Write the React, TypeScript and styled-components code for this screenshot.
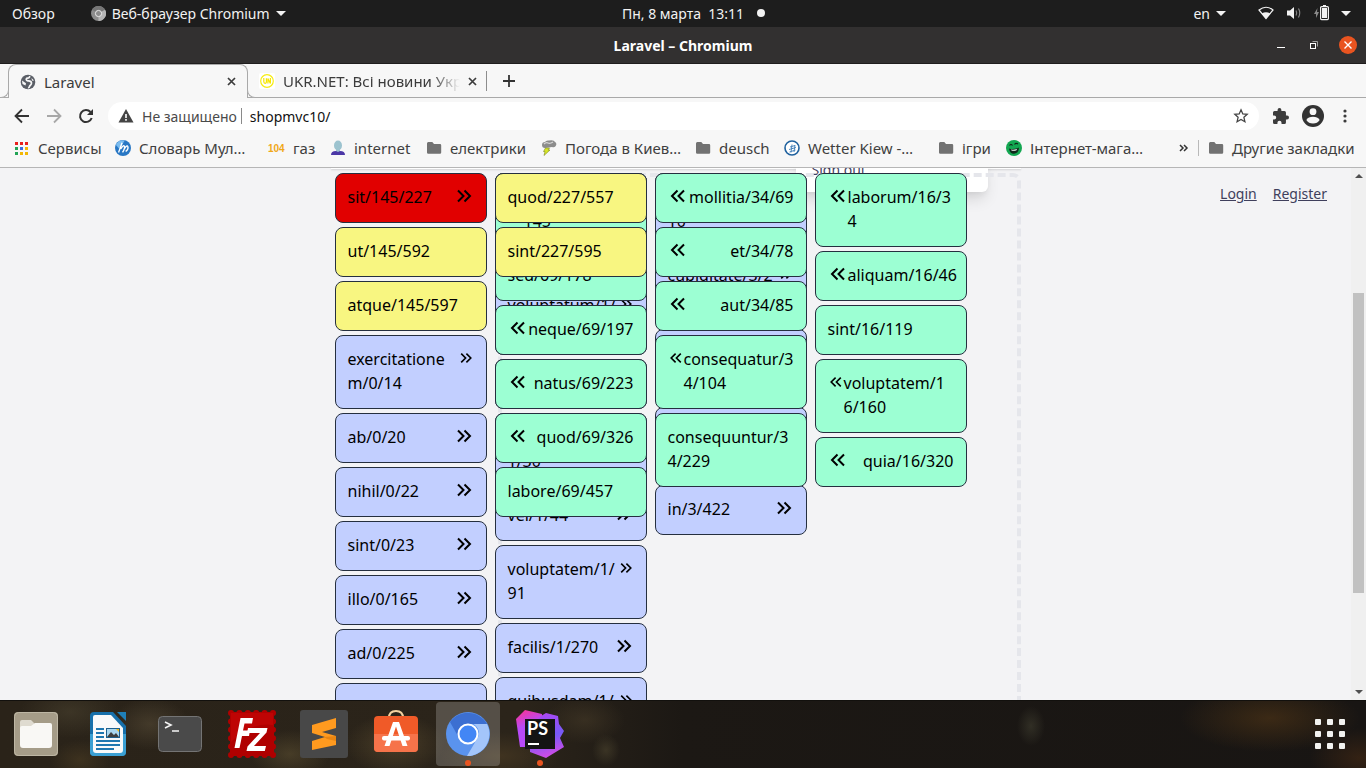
import React from "react";
import styled, { createGlobalStyle, css } from "styled-components";

const Global = createGlobalStyle`
  *, *::before, *::after { box-sizing: border-box; }
  body { margin: 0; font-family: "Noto Sans", "Open Sans", sans-serif; font-size: 14px; }
  button, input { font: inherit; color: inherit; }
  button { background: none; border: 0; padding: 0; display: inline-flex; align-items: center; }
  svg { display: block; flex: none; }
`;

const Desktop = styled.div`
  height: 100vh;
  display: flex;
  flex-direction: column;
  overflow: hidden;
`;

/* ---------- system bar ---------- */
const SystemBar = styled.header`
  flex: none;
  height: 27px;
  padding-bottom: 1px;
  display: grid;
  grid-template-columns: 1fr auto 1fr;
  align-items: center;
  background: #1d1d1d;
  color: #f2f2f2;
  font-size: 14px;
`;
const BarSide = styled.div<{ $end?: boolean }>`
  display: flex;
  align-items: center;
  justify-content: ${(p) => (p.$end ? "flex-end" : "flex-start")};
  gap: ${(p) => (p.$end ? "32px" : "36px")};
  padding: ${(p) => (p.$end ? "0 15px" : "0 12px")};
`;
const BarButton = styled.button<{ $gap?: number }>`
  gap: ${(p) => p.$gap ?? 6}px;
  white-space: pre;
`;
const Clock = styled.button`
  gap: 13px;
  padding-left: 21px;
  white-space: pre;
`;
const Dot = styled.span`
  width: 8px;
  height: 8px;
  border-radius: 50%;
  background: #f2f2f2;
`;

/* ---------- window title ---------- */
const TitleBar = styled.div`
  flex: none;
  height: 37px;
  display: grid;
  grid-template-columns: 1fr auto 1fr;
  align-items: center;
  background: #323030;
  border-bottom: 1px solid #1f1d1d;
  color: #fff;
  font-weight: 700;
  font-size: 14px;
`;
const WindowButtons = styled.div`
  display: flex;
  justify-content: flex-end;
  align-items: center;
  gap: 17px;
  padding-right: 9px;
`;

/* ---------- tabs ---------- */
const TabStrip = styled.div`
  flex: none;
  height: 34px;
  display: flex;
  padding-left: 8px;
  background: #f7f7f7;
  box-shadow: inset 0 -1px #a9a9a9;
  color: #3c3c3c;
  font-size: 15px;
`;
const Tab = styled.div<{ $active?: boolean }>`
  position: relative;
  display: flex;
  align-items: center;
  gap: 8px;
  width: 240px;
  padding: 0 11px;
  ${(p) =>
    p.$active &&
    css`
      background: #f7f7f7;
      border: 1px solid #a9a9a9;
      border-bottom: 0;
      border-radius: 8px 8px 0 0;
      &::before, &::after {
        content: "";
        position: absolute;
        bottom: 0;
        width: 8px;
        height: 8px;
        background: #f7f7f7;
        border-bottom: 1px solid #a9a9a9;
      }
      &::before { left: -8px; border-right: 1px solid #a9a9a9; border-bottom-right-radius: 8px; }
      &::after { right: -8px; border-left: 1px solid #a9a9a9; border-bottom-left-radius: 8px; }
    `}
`;
const TabTitle = styled.span<{ $fade?: boolean }>`
  flex: 1;
  overflow: hidden;
  white-space: nowrap;
  ${(p) => p.$fade && css`mask-image: linear-gradient(90deg, #000 84%, transparent);`}
`;
const NewTab = styled.button`
  align-self: center;
  height: 20px;
  margin-left: -2px;
  padding-left: 16px;
  border-left: 1px solid #8d8d8d;
`;

/* ---------- address row ---------- */
const Toolbar = styled.div`
  flex: none;
  display: flex;
  align-items: center;
  height: 36px;
  padding: 0 13px 0 14px;
  gap: 14px;
  background: #f7f7f7;
`;
const ToolGroup = styled.div<{ $gap: number }>`
  display: flex;
  align-items: center;
  gap: ${(p) => p.$gap}px;
`;
const Omnibox = styled.div`
  flex: 1;
  display: flex;
  align-items: center;
  height: 28px;
  padding: 0 10px;
  border-radius: 14px;
  background: #fff;
`;
const Security = styled.button`
  gap: 8px;
  padding-right: 4px;
  border-right: 1px solid #8a8a8a;
  height: 16px;
  color: #4a4a4a;
`;
const Address = styled.input`
  flex: 1;
  border: 0;
  outline: 0;
  padding: 0 8px;
  background: none;
  color: #111;
`;

/* ---------- bookmarks ---------- */
const Bookmarks = styled.nav`
  flex: none;
  display: flex;
  align-items: center;
  height: 34px;
  padding: 0 12px 5px 14px;
  background: #f7f7f7;
  border-bottom: 1px solid #b6b6b6;
  color: #3f3f3f;
  font-size: 15px;
`;
const Bookmark = styled.a<{ $width: number }>`
  display: flex;
  align-items: center;
  gap: 8px;
  flex: none;
  width: ${(p) => p.$width}px;
  color: inherit;
  text-decoration: none;
  white-space: nowrap;
`;
const More = styled.button`
  margin-left: auto;
  padding: 0 9px;
  height: 16px;
  margin-right: 9px;
  border-right: 1px solid #b9b9b9;
`;

/* ---------- page ---------- */
const Viewport = styled.div`
  flex: 1;
  min-height: 0;
  display: flex;
  background: #f3f3f5;
`;
const Page = styled.main`
  flex: 1;
  display: grid;
  grid-template-columns: 1fr minmax(0, 690px) 1fr;
  overflow: hidden;
`;
const Content = styled.div`
  grid-column: 2;
  position: relative;
  min-height: 0;
  padding: 5px 0 0 4px;
`;
const HeaderEdge = styled.div`
  position: absolute;
  inset: 0 0 auto 0;
  height: 1px;
  background: #fff;
  box-shadow: 0 1px 2px rgba(0, 0, 0, 0.2);
`;
const Dropdown = styled.div`
  position: absolute;
  top: -12px;
  left: 465px;
  width: 192px;
  height: 36px;
  padding: 4px 16px;
  border-radius: 0 0 6px 6px;
  background: #fff;
  box-shadow: 0 10px 15px -3px rgba(0, 0, 0, 0.12), 0 4px 6px -2px rgba(0, 0, 0, 0.06);
  color: #41415f;
  font-size: 14px;
  line-height: 20px;
`;
const DropZone = styled.div`
  position: absolute;
  top: 5px;
  left: 167px;
  right: 0;
  height: 900px;
  border: 4px dashed #e5e6eb;
  border-radius: 8px;
`;
const Tree = styled.div`
  position: relative;
  display: grid;
  grid-template-columns: repeat(4, 152px);
  column-gap: 8px;
  align-items: start;
`;
const List = styled.ul<{ $col: number }>`
  grid-row: 1;
  grid-column: ${(p) => p.$col};
  display: flex;
  flex-direction: column;
  gap: 4px;
  margin: 0;
  padding: 0;
  list-style: none;
`;
const tones = { red: "#e10000", yellow: "#f8f681", blue: "#c2cfff", green: "#9cffd3" };
type Tone = keyof typeof tones;
const Card = styled.li<{ $tone: Tone }>`
  display: flex;
  align-items: flex-start;
  justify-content: space-between;
  padding: 11px 12px 13px;
  border: 1px solid #252f3f;
  border-radius: 8px;
  background: ${(p) => tones[p.$tone]};
  color: #000;
`;
const Label = styled.span<{ $fill?: boolean }>`
  flex: ${(p) => (p.$fill ? "1" : "none")};
  font-size: 16px;
  line-height: 24px;
  white-space: nowrap;
`;
const Line = styled.span`
  display: block;
  min-height: 24px;
`;
const Arrow = styled.button<{ $small?: boolean }>`
  margin-top: ${(p) => (p.$small ? "3px" : "1px")};
`;
const Account = styled.nav`
  display: flex;
  justify-content: flex-end;
  align-items: flex-start;
  gap: 16px;
  padding: 16px 24px;
  font-size: 14px;
  line-height: 20px;
`;
const AccountLink = styled.a`
  color: #3f3f5c;
  text-decoration: underline;
`;

const Scrollbar = styled.div`
  flex: none;
  width: 15px;
  display: flex;
  flex-direction: column;
  align-items: center;
  padding: 5px 0;
  background: #f0f0f0;
`;
const Gap = styled.span<{ $grow: number }>`
  flex: ${(p) => p.$grow};
`;
const Thumb = styled.span<{ $grow: number }>`
  flex: ${(p) => p.$grow};
  width: 11px;
  background: #c1c1c1;
`;

/* ---------- dock ---------- */
const Dock = styled.footer`
  flex: none;
  height: 68px;
  display: flex;
  align-items: center;
  gap: 8px;
  padding: 0 21px 0 4px;
  box-shadow: inset 0 1px #12100d;
  background:
    radial-gradient(ellipse 50px 30px at 395px 44px, rgba(104, 86, 52, 0.5), transparent),
    radial-gradient(ellipse 40px 26px at 150px 24px, rgba(92, 80, 58, 0.5), transparent),
    radial-gradient(ellipse 40px 24px at 290px 54px, rgba(98, 84, 52, 0.5), transparent),
    radial-gradient(ellipse 50px 26px at 70px 12px, rgba(78, 70, 50, 0.5), transparent),
    radial-gradient(ellipse 30px 20px at 80px 60px, rgba(80, 64, 36, 0.5), transparent),
    radial-gradient(ellipse 60px 24px at 500px 56px, rgba(84, 66, 38, 0.5), transparent),
    radial-gradient(ellipse 40px 24px at 585px 20px, rgba(74, 62, 42, 0.5), transparent),
    radial-gradient(ellipse 14px 16px at 606px 50px, rgba(82, 74, 50, 0.5), transparent),
    radial-gradient(ellipse 14px 20px at 1031px 26px, rgba(64, 62, 48, 0.6), transparent),
    radial-gradient(ellipse 90px 34px at 1270px 18px, rgba(74, 50, 22, 0.7), transparent),
    radial-gradient(ellipse 50px 30px at 1360px 58px, rgba(70, 42, 20, 0.6), transparent),
    linear-gradient(90deg, #2a2319 0, #2b241a 38%, #1c1814 50%, #181513 100%);
`;
const DockItem = styled.button<{ $active?: boolean }>`
  position: relative;
  justify-content: center;
  width: 64px;
  height: 64px;
  border-radius: 4px;
  background: ${(p) => (p.$active ? "rgba(255, 255, 255, 0.2)" : "none")};
`;
const Running = styled.span`
  position: absolute;
  bottom: 0;
  left: 29px;
  width: 6px;
  height: 6px;
  border-radius: 50%;
  background: #e95420;
`;
const AppsButton = styled.button`
  margin-left: auto;
`;

/* ---------- icons ---------- */
const Caret = () => (
  <svg width="10" height="5" viewBox="0 0 10 5"><path d="M0 0h10L5 5z" fill="#f2f2f2" /></svg>
);
const Cross = () => (
  <svg width="9" height="9" viewBox="0 0 9 9"><path d="M1 1l7 7M8 1L1 8" stroke="#3c3c3c" strokeWidth="1.7" /></svg>
);
const Folder = () => (
  <svg width="16" height="16" viewBox="0 0 16 16"><path d="M1 3.500Q1 2 2.300 2h4L8 4h6q1.200 0 1.200 1.200V12.500q0 1.200-1.200 1.200H2.200Q1 13.700 1 12.500z" fill="#727272" /></svg>
);
const GreyChromium = () => (
  <svg width="15" height="15" viewBox="0 0 16 16">
    <circle cx="8" cy="8" r="8" fill="#8c8c8c" />
    <path d="M8 8L1 4a8 8 0 0 1 14 0z" fill="#767676" />
    <path d="M8 8l7-4a8 8 0 0 1-7 12z" fill="#b5b5b5" />
    <circle cx="8" cy="8" r="3.300" fill="#8c8c8c" stroke="#f0f0f0" strokeWidth="1" />
  </svg>
);
const Globe = () => (
  <svg width="16" height="16" viewBox="0 0 16 16">
    <circle cx="8" cy="8" r="7.300" fill="#5a5e66" />
    <path d="M9.500 2c.5 1.500-.8 2-2.200 2.200-1.700.3-1.200 2.300.4 2.600 1.700.3 3.500.2 3.800 2 .2 1.700-1.400 2.200-2 3.600-.3.900-.8 1.500-1.500 1.200" fill="none" stroke="#f7f7f7" strokeWidth="1.700" />
    <path d="M2 6.500l4 2.700-.5 2.300-3-1.500z" fill="#f7f7f7" />
    <path d="M11.500 4l2.500 2.500-2 .3z" fill="#f7f7f7" />
  </svg>
);
const UkrNet = () => (
  <svg width="16" height="16" viewBox="0 0 16 16">
    <rect width="16" height="16" rx="2" fill="#fff" />
    <circle cx="8" cy="8" r="6.300" fill="none" stroke="#f6ec12" strokeWidth="1.200" />
    <path d="M4.800 5v3.500q0 1.800 1.300 1.800T7.400 8.500V5.200M8.900 10.500V5.500l2.500 5V5" fill="none" stroke="#f6e600" strokeWidth="1.200" />
  </svg>
);
const markIcons: Record<string, React.ReactNode> = {
  apps: (
    <svg width="16" height="16" viewBox="0 0 16 16">
      {["#e8201c", "#e8201c", "#e8201c", "#22a455", "#3b6de0", "#f2b705", "#22a455", "#f2b705", "#f2b705"].map((c, i) => (
        <rect key={i} x={1 + (i % 3) * 5} y={2 + Math.floor(i / 3) * 5} width="3" height="3" fill={c} />
      ))}
    </svg>
  ),
  slovar: (
    <svg width="16" height="16" viewBox="0 0 18 18">
      <circle cx="9" cy="9" r="9" fill="#2877c4" />
      <path d="M1 5.500a9 9 0 0 1 10-5L5 10z" fill="#7cbdf0" />
      <path d="M4 14L8 3M6.500 10q3-5 4-3t-2 7M10.500 10q3-5 4-2.500t-2.500 5.500" fill="none" stroke="#fff" strokeWidth="1.500" />
    </svg>
  ),
  gas: (
    <svg width="17" height="16" viewBox="0 0 17 16">
      <text x="0" y="12" fontSize="10" fontWeight="700" fill="#f0a818" fontFamily="Liberation Sans, sans-serif">104</text>
    </svg>
  ),
  person: (
    <svg width="16" height="16" viewBox="0 0 16 16">
      <ellipse cx="8" cy="5.500" rx="4" ry="5" fill="#9cc3cf" />
      <path d="M6 9h4v3H6z" fill="#9cc3cf" />
      <path d="M1 15q0-4 5-4l2 1 2-1q5 0 5 4z" fill="#4b37a6" />
    </svg>
  ),
  storm: (
    <svg width="16" height="16" viewBox="0 0 16 16">
      <path d="M1 5q0-3 3-3 1-2 4-1.500Q13-.5 14 2q2 1 1 3.500Q14 8 11 7L4 8Q1 8 1 5z" fill="#8c8c8c" />
      <path d="M3 4q2-2 4-1t5-1" stroke="#d6d6d6" strokeWidth="1.300" fill="none" />
      <path d="M4.500 8h4L7 10h2l-6 5.500 1-4H2.500z" fill="#d7e626" stroke="#7d8a20" strokeWidth=".6" />
    </svg>
  ),
  wetter: (
    <svg width="16" height="16" viewBox="0 0 16 16">
      <circle cx="8" cy="8" r="7" fill="#fff" stroke="#1f619e" strokeWidth="1.600" />
      <path d="M5 9.500l7-2M5.500 12l6-2M6 7l5-1.500M7 12.500l1-8M10 12l1-7" stroke="#4d87bd" strokeWidth="1" />
    </svg>
  ),
  laugh: (
    <svg width="16" height="16" viewBox="0 0 16 16">
      <circle cx="8" cy="8" r="8" fill="#13a751" />
      <path d="M3 8.500q5 1.500 10-1-.5 6-5 6.300Q4 14 3 8.500z" fill="#10281a" />
      <path d="M3.500 5.500q1.500-2 3 0M8.500 4.500q1.500-2 3.500-.5" fill="none" stroke="#10281a" strokeWidth="1.200" />
      <path d="M5 9.500q3 .8 6-.5l-.5 1.200q-2.500 1-5 .3z" fill="#fff" />
    </svg>
  ),
  folder: <Folder />,
};

const marks: [string, string, number][] = [
  ["apps", "Сервисы", 101],
  ["slovar", "Словарь Мул…", 153],
  ["gas", "газ", 62],
  ["person", "internet", 96],
  ["folder", "електрики", 115],
  ["storm", "Погода в Киев…", 154],
  ["folder", "deusch", 89],
  ["wetter", "Wetter Kiew -…", 154],
  ["folder", "ігри", 68],
  ["laugh", "Інтернет-мага…", 140],
];

/* ---------- category tree ---------- */
type Item = { t: string[]; to?: "next" | "prev"; small?: boolean };
const next = (t: string[], small = false): Item => ({ t, to: "next", small });
const prev = (t: string[], small = false): Item => ({ t, to: "prev", small });
const plain = (...t: string[]): Item => ({ t });
const tinted = (tone: Tone, ...items: Item[]) => items.map((i) => ({ ...i, tone }));

const lists: { col: number; items: (Item & { tone: Tone })[] }[] = [
  {
    col: 1,
    items: [
      ...tinted("red", next(["sit/145/227"])),
      ...tinted("yellow", plain("ut/145/592"), plain("atque/145/597")),
      ...tinted(
        "blue",
        next(["exercitatione", "m/0/14"], true), next(["ab/0/20"]), next(["nihil/0/22"]),
        next(["sint/0/23"]), next(["illo/0/165"]), next(["ad/0/225"]), plain("")
      ),
    ],
  },
  {
    col: 2,
    items: tinted(
      "blue",
      plain(""), plain(""), next(["voluptatum/1/", ""], true), plain(""), plain("", "1/30"),
      next(["vel/1/44"]), next(["voluptatem/1/", "91"], true), next(["facilis/1/270"]),
      next(["quibusdam/1/", ""], true)
    ),
  },
  {
    col: 2,
    items: tinted(
      "green",
      prev(["", "145"], true), plain("sed/69/178"), prev(["neque/69/197"]),
      prev(["natus/69/223"]), prev(["quod/69/326"]), plain("labore/69/457")
    ),
  },
  { col: 2, items: tinted("yellow", plain("quod/227/557"), plain("sint/227/595")) },
  {
    col: 3,
    items: tinted(
      "blue",
      plain("", "10"), next(["cupiditate/3/2", ""], true), plain("", ""), plain("", ""), next(["in/3/422"])
    ),
  },
  {
    col: 3,
    items: tinted(
      "green",
      prev(["mollitia/34/69"]), prev(["et/34/78"]), prev(["aut/34/85"]),
      prev(["consequatur/3", "4/104"], true), plain("consequuntur/3", "4/229")
    ),
  },
  {
    col: 4,
    items: tinted(
      "green",
      prev(["laborum/16/3", "4"]), prev(["aliquam/16/46"]), plain("sint/16/119"),
      prev(["voluptatem/1", "6/160"], true), prev(["quia/16/320"])
    ),
  },
];

const Chevrons = ({ dir, small }: { dir: "next" | "prev"; small?: boolean }) => (
  <svg width={small ? 16 : 20} height={small ? 16 : 20} viewBox="0 0 20 20" fill="none" stroke="#000" strokeWidth="2">
    <path d={dir === "next" ? "M4 4.500l5.500 5.500L4 15.500M10.500 4.500L16 10l-5.500 5.500" : "M9.500 4.500L4 10l5.500 5.500M16 4.500L10.500 10l5.500 5.500"} />
  </svg>
);

const TreeCard = ({ item }: { item: Item & { tone: Tone } }) => {
  const arrow = item.to && (
    <Arrow $small={item.small} aria-label={item.to === "next" ? "Open" : "Back"}>
      <Chevrons dir={item.to} small={item.small} />
    </Arrow>
  );
  return (
    <Card $tone={item.tone}>
      {item.to === "prev" && arrow}
      <Label $fill={item.to === "prev" && item.t.length > 1}>
        {item.t.map((line, i) => <Line key={i}>{line}</Line>)}
      </Label>
      {item.to === "next" && arrow}
    </Card>
  );
};

/* ---------- dock icons ---------- */
const FilesIcon = () => (
  <svg width="44" height="44" viewBox="0 0 44 44">
    <rect width="44" height="44" rx="4" fill="#a59c88" />
    <rect x=".5" y=".5" width="43" height="43" rx="4" fill="none" stroke="#bdb6a4" />
    <path d="M6 10q0-2 2-2h9l4 4h15v8H6z" fill="#dfdbd0" />
    <path d="M6 16q0-2 2-2h9l4-3h15q2 0 2 2v20q0 3-3 3H9q-3 0-3-3z" fill="#f9f8f5" />
  </svg>
);
const WriterIcon = () => (
  <svg width="38" height="46" viewBox="0 0 38 46">
    <path d="M5 1h19l13 14v26q0 4-4 4H5q-4 0-4-4V5q0-4 4-4z" fill="#1770ab" />
    <path d="M1 23h36v18q0 4-4 4H5q-4 0-4-4z" fill="#3a9fd3" />
    <path d="M6 4h16l12 13v22q0 3-3 3H7q-3 0-3-3V6q0-2 2-2z" fill="#f8f9fa" />
    <path d="M28 1h9v9z" fill="#1f7fb8" />
    <path d="M7 18h8M7 22h8M7 26h8M7 30h24M7 34h24M7 38h18" stroke="#1d76b0" strokeWidth="2" />
    <rect x="17.500" y="17.500" width="13" height="9" fill="#a9d6ef" stroke="#1d5f8c" />
    <path d="M18 26l4-5 3 3 2-2 3 4z" fill="#3e3e3e" />
    <path d="M27 18h3v3z" fill="#f5b915" />
  </svg>
);
const TerminalIcon = () => (
  <svg width="44" height="36" viewBox="0 0 44 36">
    <rect x=".5" y=".5" width="43" height="35" rx="4" fill="#4a4a4a" stroke="#747474" />
    <path d="M7 6l6 3-6 3M14 15h7" fill="none" stroke="#f5f5f5" strokeWidth="1.600" />
  </svg>
);
const FileZillaIcon = () => (
  <svg width="48" height="48" viewBox="0 0 48 48">
    <rect x="2" y="2" width="44" height="44" fill="#b00000" />
    <rect x="3" y="3" width="42" height="42" fill="none" stroke="#b00000" strokeWidth="6" strokeLinecap="round" strokeDasharray="0 8.4" />
    <path d="M3 3h42v12Q22 12 3 32z" fill="#c40606" opacity=".7" />
    <path d="M12.500 8H25l-1 5.500h-7.500l-1.500 7h7L21 26h-7l-2.500 12H6.500z" fill="#fff" />
    <path d="M20 18h19.500l-1 4.500L26 36h12l-1.200 5H18.500l1-4.500L32 23H19z" fill="#fff" />
  </svg>
);
const SublimeIcon = () => (
  <svg width="48" height="48" viewBox="0 0 48 48">
    <rect width="48" height="48" rx="3" fill="#484848" />
    <path d="M36 8v10L22 22l14 4v9L12 40V31l13-4-13-4V15z" fill="#ff9a1f" />
    <path d="M24 27l12-1v5l-9-2z" fill="#e98512" />
  </svg>
);
const SoftwareIcon = () => (
  <svg width="44" height="48" viewBox="0 2 44 48">
    <path d="M15 10q0-7 7-7t7 7" fill="none" stroke="#f3d2a0" strokeWidth="2" />
    <rect y="8" width="44" height="36" rx="4" fill="#f05a28" />
    <path d="M0 26h44v14q0 4-4 4H4q-4 0-4-4z" fill="#f6734a" />
    <path d="M19 14h6l8.500 24h-5L22 18.500 15.500 38h-5z" fill="#fff" />
    <rect x="8" y="28" width="28" height="4.500" rx="2" fill="#fff" />
  </svg>
);
const ChromiumIcon = () => (
  <svg width="44" height="44" viewBox="0 0 44 44">
    <circle cx="22" cy="22" r="22" fill="#5a93ee" />
    <path d="M4 10a22 22 0 0 1 37 2H22a10 10 0 0 0-9 14z" fill="#3c6fd1" />
    <path d="M41 12a22 22 0 0 1-20 32l10-17a10 10 0 0 0-4-15z" fill="#a3c5fa" />
    <circle cx="22" cy="22" r="9.500" fill="#4286f5" stroke="#fff" strokeWidth="2" />
  </svg>
);
const PhpStormIcon = () => (
  <svg width="48" height="48" viewBox="0 0 48 48">
    <defs>
      <linearGradient id="ps" x1="0" y1="0" x2="0.3" y2="1">
        <stop offset="0" stopColor="#ff318c" /><stop offset=".5" stopColor="#b74af7" />
      </linearGradient>
      <linearGradient id="ps2" x1="0" y1="0" x2="0.2" y2="1">
        <stop offset="0" stopColor="#b345f1" /><stop offset=".6" stopColor="#765af8" /><stop offset="1" stopColor="#c94de8" />
      </linearGradient>
    </defs>
    <path d="M0 9L9 0l17 4v33H4z" fill="url(#ps)" />
    <path d="M25 6l5-3 12 3 1 8 5 7-4 7 4 9-18 11-16-6V20z" fill="url(#ps2)" />
    <rect x="9" y="9" width="30" height="30" fill="#141414" />
    <text x="11" y="25" fontSize="18" fontWeight="700" fill="#fff" fontFamily="Lato, sans-serif">PS</text>
    <path d="M12 34h11" stroke="#fff" strokeWidth="2" />
  </svg>
);

const dock: [string, () => React.ReactElement, boolean, boolean][] = [
  ["Files", FilesIcon, false, false],
  ["Writer", WriterIcon, false, false],
  ["Terminal", TerminalIcon, false, false],
  ["FileZilla", FileZillaIcon, false, false],
  ["Sublime Text", SublimeIcon, false, false],
  ["Software", SoftwareIcon, false, false],
  ["Chromium", ChromiumIcon, true, true],
  ["PhpStorm", PhpStormIcon, false, true],
];

export default function App() {
  return (
    <Desktop>
      <Global />
      <SystemBar>
        <BarSide>
          <BarButton>Обзор</BarButton>
          <BarButton><GreyChromium />Веб-браузер Chromium<Caret /></BarButton>
        </BarSide>
        <Clock>Пн, 8 марта  13:11<Dot /></Clock>
        <BarSide $end>
          <BarButton>en<Caret /></BarButton>
          <BarButton aria-label="System menu" $gap={12}>
            <svg width="16" height="14" viewBox="0 0 16 14">
              <path d="M1 4q7-5.500 14 0L8 12.500z" fill="none" stroke="#f2f2f2" strokeWidth="1.200" />
              <path d="M3.800 7.500q4.200-2.500 8.400 0L8 12.800z" fill="#f2f2f2" />
            </svg>
            <svg width="16" height="14" viewBox="0 0 16 14">
              <path d="M1 4.500h3L8 1v12L4 9.500H1z" fill="#f2f2f2" />
              <path d="M10 4.500q1.500 2.500 0 5M12.500 2.500q2.500 4.500 0 9" fill="none" stroke="#8a8a8a" strokeWidth="1.100" />
            </svg>
            <svg width="15" height="16" viewBox="0 0 15 16">
              <path d="M3.500 3L0 9h2v4l3-6H3z" fill="#8a8a8a" />
              <path d="M9 0h3v2H9z" fill="#f2f2f2" />
              <rect x="6.600" y="1.600" width="7.800" height="13" rx="1" fill="none" stroke="#f2f2f2" strokeWidth="1.200" />
              <rect x="8" y="3" width="5" height="10" fill="#f2f2f2" />
            </svg>
            <Caret />
          </BarButton>
        </BarSide>
      </SystemBar>

      <TitleBar>
        <span />
        <span>Laravel – Chromium</span>
        <WindowButtons>
          <button aria-label="Minimize">
            <svg width="16" height="16" viewBox="0 0 16 16"><path d="M4 10.500h8" stroke="#fff" /></svg>
          </button>
          <button aria-label="Restore">
            <svg width="16" height="16" viewBox="0 0 16 16" fill="none">
              <path d="M6.500 4.500h5v5" stroke="#a0a0a0" /><rect x="4.500" y="6.500" width="5" height="5" stroke="#fff" />
            </svg>
          </button>
          <button aria-label="Close">
            <svg width="18" height="18" viewBox="0 0 18 18">
              <circle cx="9" cy="9" r="9" fill="#e95420" /><path d="M5.500 5.500l7 7M12.500 5.500l-7 7" stroke="#fff" strokeWidth="1.400" />
            </svg>
          </button>
        </WindowButtons>
      </TitleBar>

      <TabStrip>
        <Tab $active>
          <Globe /><TabTitle>Laravel</TabTitle>
          <button aria-label="Close tab"><Cross /></button>
        </Tab>
        <Tab>
          <UkrNet /><TabTitle $fade>UKR.NET: Всі новини України</TabTitle>
          <button aria-label="Close tab"><Cross /></button>
        </Tab>
        <NewTab aria-label="New tab">
          <svg width="12" height="12" viewBox="0 0 12 12"><path d="M6 0v12M0 6h12" stroke="#333" strokeWidth="1.800" /></svg>
        </NewTab>
      </TabStrip>

      <Toolbar>
        <ToolGroup $gap={16}>
          <button aria-label="Back">
            <svg width="16" height="16" viewBox="0 0 16 16"><path d="M15 8H2M8 1.500L1.500 8 8 14.500" fill="none" stroke="#333" strokeWidth="1.800" /></svg>
          </button>
          <button aria-label="Forward">
            <svg width="16" height="16" viewBox="0 0 16 16"><path d="M1 8h13M8 1.500L14.500 8 8 14.500" fill="none" stroke="#a8a8a8" strokeWidth="1.800" /></svg>
          </button>
          <button aria-label="Reload">
            <svg width="16" height="16" viewBox="0 0 16 16">
              <path d="M13.700 10A6 6 0 1 1 12.500 4" fill="none" stroke="#333" strokeWidth="2" /><path d="M15 1v6H9z" fill="#333" />
            </svg>
          </button>
        </ToolGroup>
        <Omnibox>
          <Security>
            <svg width="16" height="14" viewBox="0 0 16 14">
              <path d="M8 0l7.500 13.500H.5z" fill="#444" /><path d="M7.200 5h1.600v4H7.200zM7.200 10h1.600v1.700H7.200z" fill="#fff" />
            </svg>
            Не защищено
          </Security>
          <Address aria-label="Address" defaultValue="shopmvc10/" />
          <button aria-label="Bookmark this page">
            <svg width="16" height="16" viewBox="0 0 16 16"><path d="M8 1.800l1.800 4.100 4.400.4-3.300 3 1 4.400L8 11.400l-3.900 2.300 1-4.400-3.300-3 4.400-.4z" fill="none" stroke="#444" strokeWidth="1.300" /></svg>
          </button>
        </Omnibox>
        <ToolGroup $gap={13}>
          <button aria-label="Extensions">
            <svg width="16" height="16" viewBox="2 1 21 21"><path d="M20.500 11H19V7a2 2 0 0 0-2-2h-4V3.500a2.500 2.500 0 0 0-5 0V5H4a2 2 0 0 0-2 2v3.800h1.500a2.700 2.700 0 0 1 0 5.400H2V20a2 2 0 0 0 2 2h3.800v-1.500a2.700 2.700 0 0 1 5.400 0V22H17a2 2 0 0 0 2-2v-4h1.500a2.500 2.500 0 0 0 0-5z" fill="#3c3c3c" /></svg>
          </button>
          <button aria-label="Profile">
            <svg width="22" height="22" viewBox="0 0 22 22">
              <circle cx="11" cy="11" r="11" fill="#333" /><circle cx="11" cy="6.700" r="3.400" fill="#f7f7f7" />
              <path d="M4.300 15q2-3.300 6.700-3.300t6.700 3.300q-2.300 3.500-6.700 3.500T4.300 15z" fill="#f7f7f7" />
            </svg>
          </button>
          <button aria-label="Menu">
            <svg width="16" height="16" viewBox="0 0 16 16" fill="#3c3c3c"><circle cx="8" cy="3" r="1.600" /><circle cx="8" cy="8" r="1.600" /><circle cx="8" cy="13" r="1.600" /></svg>
          </button>
        </ToolGroup>
      </Toolbar>

      <Bookmarks>
        {marks.map(([icon, label, width]) => (
          <Bookmark key={label} href="#" $width={width}>{markIcons[icon]}{label}</Bookmark>
        ))}
        <More aria-label="More bookmarks">
          <svg width="10" height="8" viewBox="0 0 10 8"><path d="M1 1l3 3-3 3M5 1l3 3-3 3" fill="none" stroke="#333" strokeWidth="1.500" /></svg>
        </More>
        <Bookmark href="#" $width={146}><Folder />Другие закладки</Bookmark>
      </Bookmarks>

      <Viewport>
        <Page>
          <Content>
            <HeaderEdge />
            <Dropdown>Sign out</Dropdown>
            <DropZone />
            <Tree>
              {lists.map((list, i) => (
                <List key={i} $col={list.col}>
                  {list.items.map((item, j) => <TreeCard key={j} item={item} />)}
                </List>
              ))}
            </Tree>
          </Content>
          <Account>
            <AccountLink href="#">Login</AccountLink>
            <AccountLink href="#">Register</AccountLink>
          </Account>
        </Page>
        <Scrollbar>
          <svg width="8" height="6" viewBox="0 0 8 6"><path d="M0 5h8L4 1z" fill="#505050" /></svg>
          <Gap $grow={114} />
          <Thumb $grow={300} />
          <Gap $grow={96} />
          <svg width="8" height="6" viewBox="0 0 8 6"><path d="M0 1h8L4 5z" fill="#505050" /></svg>
        </Scrollbar>
      </Viewport>

      <Dock>
        {dock.map(([name, Icon, active, running]) => (
          <DockItem key={name} aria-label={name} $active={active}>
            <Icon />{running && <Running />}
          </DockItem>
        ))}
        <AppsButton aria-label="Show applications">
          <svg width="30" height="30" viewBox="0 0 30 30" fill="#f2f2f0">
            {[0, 1, 2].flatMap((r) => [0, 1, 2].map((c) => <rect key={`${r}${c}`} x={c * 12} y={r * 12} width="6" height="6" rx="1" />))}
          </svg>
        </AppsButton>
      </Dock>
    </Desktop>
  );
}
